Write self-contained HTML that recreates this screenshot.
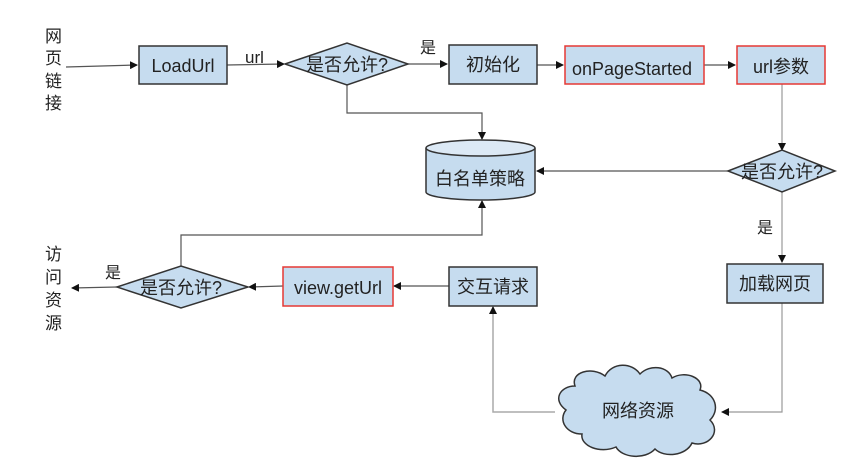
<!DOCTYPE html>
<html><head><meta charset="utf-8"><style>
html,body{margin:0;padding:0;background:#fff;width:864px;height:475px;overflow:hidden}
text{font-family:"Liberation Sans","Noto Sans CJK SC",sans-serif;fill:#222}
</style></head><body>
<svg width="864" height="475" viewBox="0 0 864 475" xmlns="http://www.w3.org/2000/svg">
<defs>
<marker id="a" markerWidth="8" markerHeight="8" refX="7" refY="4" orient="auto" markerUnits="userSpaceOnUse">
<path d="M0,0 L8,4 L0,8 Z" fill="#111"/></marker>
</defs>
<g stroke="#555" stroke-width="1.2" fill="none">
<path d="M66,67 L137,65" marker-end="url(#a)"/>
<path d="M227,65 L284,64" marker-end="url(#a)"/>
<path d="M408,64 L447,64" marker-end="url(#a)"/>
<path d="M537,65 L563,65" marker-end="url(#a)"/>
<path d="M704,65 L735,65" marker-end="url(#a)"/>
<path d="M347,84 L347,113 L482,113 L482,139" marker-end="url(#a)"/>
<path d="M782,84 L782,150" marker-end="url(#a)" stroke="#999"/>
<path d="M728,171 L537,171" marker-end="url(#a)"/>
<path d="M782,192 L782,262" marker-end="url(#a)" stroke="#999"/>
<path d="M782,303 L782,412 L722,412" marker-end="url(#a)" stroke="#999"/>
<path d="M555,412 L493,412 L493,307" marker-end="url(#a)" stroke="#aaa" stroke-width="1.5"/>
<path d="M449,286 L394,286" marker-end="url(#a)"/>
<path d="M283,286 L249,287" marker-end="url(#a)"/>
<path d="M181,266 L181,235 L482,235 L482,201" marker-end="url(#a)"/>
<path d="M117,287 L72,288" marker-end="url(#a)"/>
</g>
<g fill="#c6dcef" stroke="#333" stroke-width="1.5">
<rect x="139" y="46" width="88" height="38"/>
<path d="M285,64 L347,43 L408,64 L347,85 Z"/>
<rect x="449" y="45" width="88" height="39"/>
<rect x="565" y="46" width="139" height="38" stroke="#e53935"/>
<rect x="737" y="46" width="88" height="38" stroke="#e53935"/>
<path d="M426,148 L426,192 A54.5,8 0 0 0 535,192 L535,148"/>
<ellipse cx="480.5" cy="148" rx="54.5" ry="8" fill="#dce9f5"/>
<path d="M728,171 L782,150 L835,171 L782,192 Z"/>
<rect x="727" y="264" width="96" height="39"/>
<rect x="449" y="267" width="88" height="39"/>
<rect x="283" y="267" width="110" height="39" stroke="#e53935"/>
<path d="M117,287 L181,266 L248,287 L181,308 Z"/>
<path d="M575,386 C570,372 592,366 605,376 C612,362 632,362 640,374 C650,364 668,366 672,378 C685,370 705,378 700,390 C716,394 720,410 710,420 C722,432 708,448 692,443 C686,456 664,458 655,449 C645,460 622,458 616,447 C600,454 580,446 582,434 C566,434 558,420 566,410 C552,400 560,386 575,386 Z"/>
</g>
<g font-size="18" text-anchor="middle">
<text x="183" y="72">LoadUrl</text>
<text x="347" y="71" font-size="18">是否允许?</text>
<text x="493" y="71">初始化</text>
<text x="632" y="75">onPageStarted</text>
<text x="781" y="73">url参数</text>
<text x="480" y="185">白名单策略</text>
<text x="782" y="178">是否允许?</text>
<text x="775" y="290">加载网页</text>
<text x="493" y="293">交互请求</text>
<text x="338" y="294">view.getUrl</text>
<text x="181" y="294">是否允许?</text>
<text x="638" y="417">网络资源</text>
</g>
<g font-size="16">
<text x="245" y="63" font-size="17">url</text>
<text x="420" y="53">是</text>
<text x="757" y="233">是</text>
<text x="105" y="278">是</text>
<text x="45" y="42" font-size="17">网</text><text x="45" y="64" font-size="17">页</text><text x="45" y="87" font-size="17">链</text><text x="45" y="109" font-size="17">接</text>
<text x="45" y="260" font-size="17">访</text><text x="45" y="283" font-size="17">问</text><text x="45" y="306" font-size="17">资</text><text x="45" y="329" font-size="17">源</text>
</g>
</svg>
</body></html>
